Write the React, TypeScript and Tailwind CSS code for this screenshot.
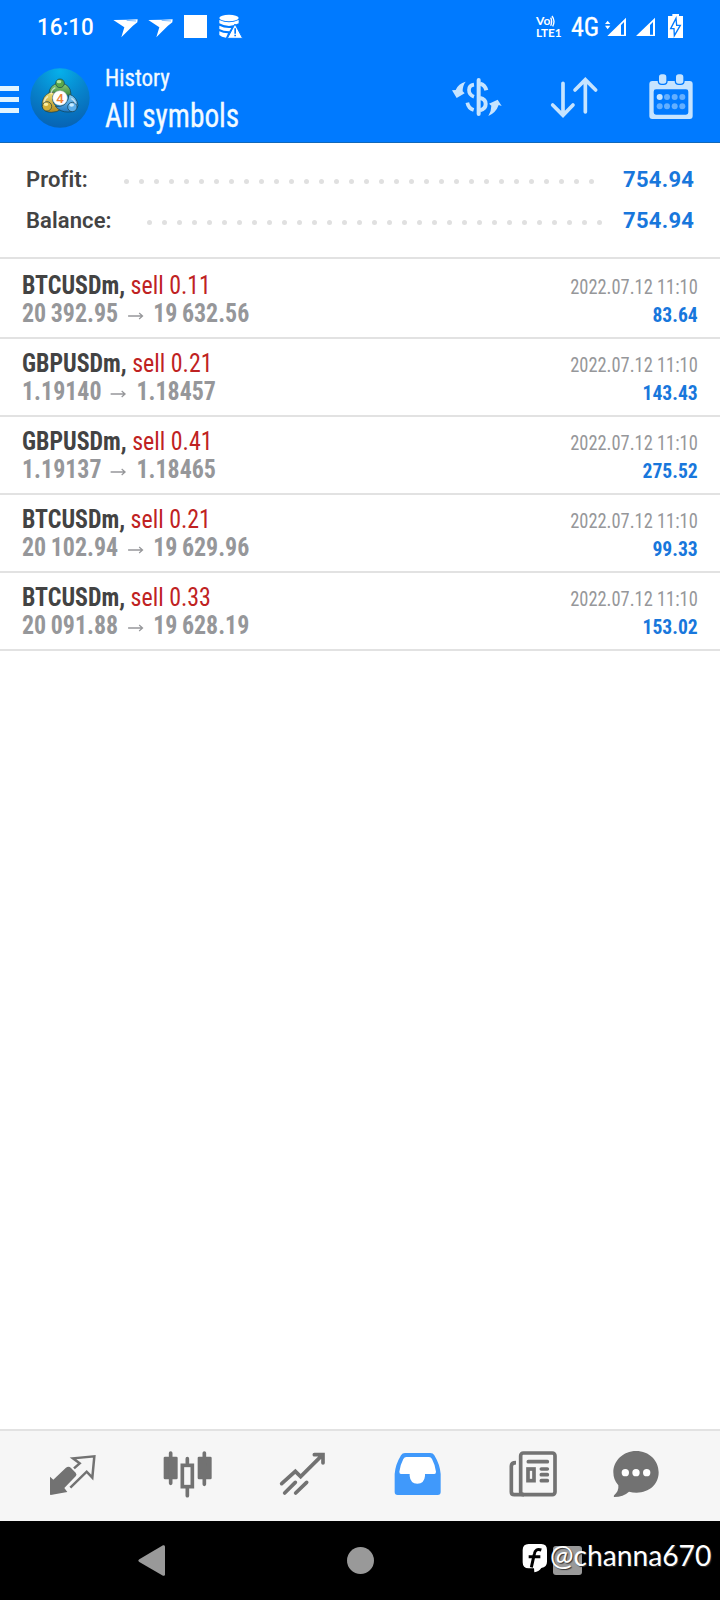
import { type ReactNode } from 'react';
import clsx from 'clsx';

interface Deal {
  symbol: string;
  side: string;
  open: string;
  close: string;
  time: string;
  profit: string;
}

const deals: Deal[] = [
  { symbol: 'BTCUSDm', side: 'sell 0.11', open: '20 392.95', close: '19 632.56', time: '2022.07.12 11:10', profit: '83.64' },
  { symbol: 'GBPUSDm', side: 'sell 0.21', open: '1.19140', close: '1.18457', time: '2022.07.12 11:10', profit: '143.43' },
  { symbol: 'GBPUSDm', side: 'sell 0.41', open: '1.19137', close: '1.18465', time: '2022.07.12 11:10', profit: '275.52' },
  { symbol: 'BTCUSDm', side: 'sell 0.21', open: '20 102.94', close: '19 629.96', time: '2022.07.12 11:10', profit: '99.33' },
  { symbol: 'BTCUSDm', side: 'sell 0.33', open: '20 091.88', close: '19 628.19', time: '2022.07.12 11:10', profit: '153.02' },
];

interface IconProps {
  /** viewBox, three units per pixel */
  box: string;
  className?: string;
  children: ReactNode;
}

function Icon({ box, className, children }: IconProps) {
  return (
    <svg viewBox={box} fill="currentColor" className={clsx('shrink-0', className)}>
      {children}
    </svg>
  );
}

function Bird({ className }: { className?: string }) {
  return (
    <Icon box="336 45 84 75" className={clsx('h-[25px] w-7', className)}>
      <path d="M340 60 L379 59 L413 58 L412 67 L398 78 L364 112 L373 82 Z" />
      <path d="M380 61 L408 63" stroke="#007aff" strokeWidth="1.5" />
    </Icon>
  );
}

function StatusBar() {
  return (
    <div className="flex h-[55px] items-start text-white">
      <span className="ml-[37px] mt-[13px] w-[60px] origin-left scale-x-[0.95] text-[23.5px] leading-7 font-medium">16:10</span>
      <Bird className="ml-[15px] mt-[15px]" />
      <Bird className="ml-[7px] mt-[15px]" />
      <div className="ml-[9px] mt-[15px] size-[23px] bg-white" />
      <Icon box="654 42 75 75" className="ml-[11px] mt-[14px] size-[25px]">
        <ellipse cx="687" cy="54" rx="29" ry="10" />
        <path d="M658 60 Q687 74 716 60 V70 Q687 86 658 70 Z" />
        <path d="M658 77 Q674 86 694 84 L688 94 Q670 94 658 87 Z" />
        <path d="M658 94 Q668 100 684 100 L678 113 Q664 111 658 105 Z" />
        <path d="M705 72 L728 115 H682 Z" stroke="#007aff" strokeWidth="3" />
        <path d="M703 85 H708 V101 H703 Z M703 104 H708 V109 H703 Z" fill="#007aff" />
      </Icon>
      <div className="ml-[293px] mt-[15px] w-[27px] text-[10.5px] leading-3 font-bold font-['Lato']">
        <div className="flex h-3 items-center">
          <span className="w-[14px] origin-left scale-x-[1.15]">Vo</span>
          <Icon box="396 44 18 36" className="h-3 w-1.5">
            <path d="M398 52 Q404 63 398 76 M402 47 Q413 62 404 78" fill="none" stroke="currentColor" strokeWidth="4" />
          </Icon>
        </div>
        <div className="h-3 origin-left scale-x-[1.12] whitespace-nowrap">LTE1</div>
      </div>
      <span className="ml-[8px] mt-[12px] w-[28px] text-[26px] leading-[30px] font-normal [font-stretch:75%] [-webkit-text-stroke:0.3px_white]">4G</span>
      <Icon box="552 45 69 66" className="ml-[5px] mt-[15px] h-[22px] w-[23px]">
        <path d="M555 72 L563 62 L571 72 Z M555 77 L563 88 L571 77 Z" />
        <path fillRule="evenodd" d="M562 108 L618 53 V108 Z M603 75 V104 H612 V66 Z" />
      </Icon>
      <Icon box="645 45 63 66" className="ml-[8px] mt-[15px] h-[22px] w-[21px]">
        <path fillRule="evenodd" d="M648 108 L705 53 V108 Z M690 75 V104 H699 V66 Z" />
      </Icon>
      <Icon box="741 39 51 78" className="ml-[11px] mt-[13px] h-[26px] w-[17px]">
        <path d="M757 42 H777 V48 H789 V114 H744 V48 H757 Z" />
        <path d="M768 55 L752 86 H762 L763 107 L781 76 H770 Z" fill="#fff" stroke="#007aff" strokeWidth="4" />
      </Icon>
    </div>
  );
}

function Logo() {
  return (
    <svg viewBox="90 203 180 180" className="ml-[11px] mt-[13px] size-[60px] shrink-0">
      <defs>
        <radialGradient id="disc" cx="0.5" cy="0.05" r="0.95">
          <stop offset="0" stopColor="#06b0ea" />
          <stop offset="0.5" stopColor="#0784cc" />
          <stop offset="1" stopColor="#0763b4" />
        </radialGradient>
        <linearGradient id="green" x1="0" y1="0" x2="0" y2="1">
          <stop offset="0" stopColor="#8fd07a" />
          <stop offset="1" stopColor="#2c7a35" />
        </linearGradient>
        <linearGradient id="gold" x1="0" y1="0" x2="0" y2="1">
          <stop offset="0" stopColor="#ecdf78" />
          <stop offset="1" stopColor="#b0861c" />
        </linearGradient>
        <linearGradient id="azure" x1="0" y1="0" x2="0" y2="1">
          <stop offset="0" stopColor="#8fd3f7" />
          <stop offset="1" stopColor="#1f78c4" />
        </linearGradient>
      </defs>
      <circle cx="180" cy="293" r="89" fill="url(#disc)" />
      <g stroke="#143d4a" strokeWidth="2">
        <path d="M148 292 Q143 262 164 252 Q180 245 196 252 Q216 262 212 292 Q196 276 180 276 Q162 277 148 292 Z" fill="url(#green)" />
        <path d="M150 276 Q124 288 126 318 Q132 336 154 336 Q172 336 184 326 Q162 318 158 300 Q156 286 164 276 Z" fill="url(#gold)" />
        <path d="M208 282 Q232 290 234 316 Q228 336 204 335 Q182 336 166 318 Q186 320 196 310 Q206 300 208 282 Z" fill="url(#azure)" />
        <circle cx="180" cy="249" r="13" fill="#5aa84a" />
        <circle cx="141" cy="318" r="14" fill="#d2b038" />
        <circle cx="217" cy="320" r="14" fill="#5cadea" />
      </g>
      <path d="M166 262 Q154 268 153 281 M144 288 Q133 295 132 306 M214 294 Q226 301 227 310" fill="none" stroke="#fff" strokeOpacity="0.6" strokeWidth="4" />
      <ellipse cx="177" cy="244" rx="7" ry="5" fill="#b8e6a0" />
      <ellipse cx="138" cy="312" rx="7" ry="5" fill="#fbeea0" />
      <ellipse cx="215" cy="314" rx="7" ry="5" fill="#c9ecff" />
      <circle cx="180" cy="293" r="22" fill="#fff" stroke="#b9c4c4" strokeWidth="1.5" />
      <text x="180" y="307" textAnchor="middle" fill="#ee8136" className="font-['Roboto'] text-[40px] font-medium">4</text>
    </svg>
  );
}

function Header() {
  return (
    <div className="flex h-[87px] items-start text-[#c6e4ff]">
      <div className="mt-[31px] flex w-[19px] flex-col gap-[6px] text-white">
        <div className="h-[5px] bg-[#e2f5ff]" />
        <div className="h-[5px] bg-[#e2f5ff]" />
        <div className="h-[5px] bg-[#e2f5ff]" />
      </div>
      <Logo />
      <div className="ml-[15px] mt-[9px] w-[200px] text-[#f2faff] [font-stretch:75%] [-webkit-text-stroke:0.3px_#f2faff]">
        <div className="origin-left scale-x-[0.955] text-2xl leading-7">History</div>
        <div className="mt-[5px] origin-left scale-x-[0.89] text-[33px] leading-[38px]">All symbols</div>
      </div>
      <Icon box="90 225 165 135" className="ml-[145px] mt-5 h-[45px] w-[55px]">
        <path d="M96 271 L107 270 Q115 250 137 245 Q128 256 128 274 L134 280 L110 294 Z" />
        <path d="M245 318 L236 315 Q228 338 205 348 Q214 334 214 317 L207 311 L233 299 Z" />
        <g fill="none" stroke="currentColor" strokeWidth="11">
          <path d="M176 240 V342" strokeLinecap="round" strokeWidth="12" />
          <path d="M162 254 Q147 256 147 270 Q147 285 162 290" />
          <path d="M142 308 Q145 325 161 330" />
          <path d="M180 251 Q195 255 199 271" strokeWidth="12" />
          <path d="M180 294 Q197 297 197 312 Q197 327 180 331" strokeWidth="12" />
        </g>
      </Icon>
      <Icon box="387 225 150 135" className="ml-[44px] mt-5 h-[45px] w-[50px]">
        <g fill="none" stroke="currentColor" strokeWidth="11" strokeLinecap="round">
          <path d="M429 250 V344 M398 315 L429 346 L459 315" />
          <path d="M496 336 V242 M465 270 L496 239 L527 270" />
        </g>
      </Icon>
      <Icon box="678 216 150 150" className="ml-[47px] mt-[17px] size-[50px]">
        <path fillRule="evenodd" d="M697 243 H809 Q818 243 818 252 V348 Q818 357 809 357 H697 Q688 357 688 348 V252 Q688 243 697 243 Z M708 268 Q701 268 701 275 V337 Q701 344 708 344 H798 Q805 344 805 337 V275 Q805 268 798 268 Z" />
        <g stroke="#007aff" strokeWidth="4">
          <rect x="715" y="221" width="26" height="32" rx="10" />
          <rect x="766" y="221" width="26" height="32" rx="10" />
        </g>
        <circle cx="719" cy="291" r="9" />
        <g fillOpacity="0.5">
          <circle cx="741" cy="291" r="9" />
          <circle cx="764" cy="291" r="9" />
          <circle cx="787" cy="291" r="9" />
          <circle cx="719" cy="319" r="9" />
          <circle cx="741" cy="319" r="9" />
          <circle cx="764" cy="319" r="9" />
          <circle cx="787" cy="319" r="9" />
        </g>
      </Icon>
    </div>
  );
}

function SummaryRow({ label, value, dots, dotsClass }: { label: string; value: string; dots: number; dotsClass: string }) {
  return (
    <div className="flex h-[41px] items-center pr-[26px] pl-[26px] text-[22px] font-semibold text-[#434343]">
      <span className="tracking-[0.1px]">{label}</span>
      <div className={clsx('mt-[3px] ml-auto flex gap-[10px]', dotsClass)}>
        {Array.from({ length: dots }, (_, i) => (
          <span key={i} className="size-[5px] rounded-full bg-[#e0e0e0]" />
        ))}
      </div>
      <span className="w-[71px] text-right font-bold tracking-[0.3px] whitespace-nowrap text-[#1877dc]">{value}</span>
    </div>
  );
}

function DealRow({ deal }: { deal: Deal }) {
  return (
    <div className="flex h-[78px] justify-between border-b-2 border-[#e2e2e2] pt-[10px] pr-[22px] pl-[22px] leading-7 whitespace-nowrap [font-stretch:75%]">
      <div className="origin-left scale-x-[0.92] text-[26px]">
        <div className="text-[#bf2222]">
          <span className="font-bold text-[#434343]">{deal.symbol},</span> {deal.side}
        </div>
        <div className="flex font-bold text-[#96979a] [word-spacing:-1px]">
          {deal.open}
          <Icon box="381 500 60 36" className="mx-[9px] mt-[11px] h-3 w-5">
            <path d="M385 518 H431 M421 509 L432 518 L421 527" fill="none" stroke="currentColor" strokeWidth="4" />
          </Icon>
          {deal.close}
        </div>
      </div>
      <div className="pt-[2px] text-right text-xl leading-7">
        <div className="origin-right scale-x-[0.9] text-[20.5px] text-[#96979a]">{deal.time}</div>
        <div className="origin-right scale-x-[0.98] font-bold text-[#1877dc]">{deal.profit}</div>
      </div>
    </div>
  );
}

function TabBar() {
  return (
    <div className="flex h-[92px] items-start border-t-2 border-[#e2e2e2] bg-[#f6f6f6] pt-[19px] pl-12 text-[#727272]">
      <Icon box="144 90 150 150" className="size-[50px]">
        <path d="M150 170 L160 179 L197 144 Q206 137 213 144 L227 158 Q232 164 227 169 L193 204 L202 216 L152 225 Q150 225 150 222 Z" />
        <path d="M222 145 L239 130 L219 115 L283 109 L277 173 L260 155 L211 203" fill="none" stroke="currentColor" strokeWidth="7.5" />
      </Icon>
      <Icon box="489 90 150 150" className="ml-[65px] size-[50px]">
        <rect x="491" y="110" width="42" height="68" rx="4" />
        <rect x="593" y="110" width="42" height="68" rx="4" />
        <path d="M512 99 V190 M613 99 V193 M562 116 V130 M562 204 V227" stroke="currentColor" strokeWidth="11" strokeLinecap="round" />
        <rect x="547" y="136" width="30" height="64" fill="none" stroke="currentColor" strokeWidth="11" />
      </Icon>
      <Icon box="114 90 150 150" className="ml-[65px] size-[50px]">
        <g fill="none" stroke="currentColor" strokeWidth="11" strokeLinecap="round">
          <path d="M125 191 L166 154 L182 170 L246 106 M223 104 H249 V129" />
          <path d="M134 219 L166 187 M167 219 L200 187" />
        </g>
        <path d="M232 102 H251 V120 Z" />
      </Icon>
      <Icon box="459 90 150 150" className="ml-[65px] size-[50px] text-[#4099fb]">
        <path d="M495 99 H571 Q579 99 583 106 Q600 134 602 162 V216 Q602 225 593 225 H473 Q464 225 464 216 V162 Q466 134 483 106 Q487 99 495 99 Z" />
        <path d="M499 111 H567 Q573 111 576 117 Q586 136 588 155 Q588 162 583 162 H555 V168 Q553 191 532 191 Q511 191 509 168 V162 H483 Q478 162 478 155 Q480 136 490 117 Q493 111 499 111 Z" fill="#fff" />
      </Icon>
      <Icon box="84 90 150 150" className="ml-[65px] size-[50px]">
        <g fill="none" stroke="currentColor" strokeWidth="11">
          <rect x="122" y="99" width="103" height="125" rx="8" />
          <path d="M108 128 Q94 128 94 138 V216 Q94 224 103 224 H132" />
          <rect x="144" y="147" width="18" height="35" />
          <path d="M145 125 H202 M184 147 H202 M184 164 H202 M184 182 H202" strokeLinecap="round" />
        </g>
      </Icon>
      <Icon box="393 90 150 150" className="ml-[53px] size-[50px]">
        <path d="M468 93 C508 93 536 122 536 157 C536 193 508 218 470 218 Q458 218 447 215 Q430 231 402 231 Q400 228 403 225 Q417 213 415 196 Q400 180 400 157 C400 122 430 93 468 93 Z" />
        <g fill="#fff">
          <circle cx="436" cy="158" r="11" />
          <circle cx="468" cy="158" r="11" />
          <circle cx="500" cy="158" r="11" />
        </g>
      </Icon>
    </div>
  );
}

function NavBar() {
  return (
    <div className="relative flex h-[79px] items-start bg-black text-[#999]">
      <Icon box="411 372 90 99" className="mt-[23px] ml-[137px] h-[33px] w-[30px]">
        <path d="M489 376 Q495 374 495 380 V463 Q495 469 489 467 L418 426 Q412 422 418 418 Z" />
      </Icon>
      <div className="mt-[26px] ml-[180px] size-[27px] rounded-full bg-[#999]" />
      <div className="mt-[25px] ml-[179px] size-[29px] rounded-[3px] bg-[#999]" />
      {/* Watermark lies over the recents button */}
      <div className="absolute top-[17px] left-[522px] flex items-start text-white">
        <Icon box="126 369 78 90" className="mt-[5px] h-[30px] w-[26px]">
          <path d="M146 372 H184 Q201 372 201 390 V425 Q201 441 184 444 Q176 455 163 457 L162 445 H146 Q128 445 128 427 V390 Q128 372 146 372 Z" />
          <path d="M184 390 Q166 384 163 402 L154 442 M146 410 H181" fill="none" stroke="#000" strokeWidth="9" />
        </Icon>
        <span className="ml-[2px] text-[28.2px] leading-[34px] font-['Lato'] [text-shadow:1px_1px_1px_#333]">@channa670</span>
      </div>
    </div>
  );
}

export default function App() {
  return (
    <div className="flex h-[1600px] w-[720px] flex-col overflow-hidden bg-white font-['Roboto',sans-serif]">
      <div className="h-[143px] shrink-0 border-b border-[#1268b8] bg-[#007aff]">
        <StatusBar />
        <Header />
      </div>
      <div className="h-[116px] shrink-0 border-b-2 border-[#e2e2e2] pt-[16px]">
        <SummaryRow label="Profit:" value="754.94" dots={32} dotsClass="mr-[29px]" />
        <SummaryRow label="Balance:" value="754.94" dots={31} dotsClass="mr-[21px]" />
      </div>
      <div className="flex-1 pt-[2px]">
        {deals.map((deal, i) => (
          <DealRow key={i} deal={deal} />
        ))}
      </div>
      <TabBar />
      <NavBar />
    </div>
  );
}
